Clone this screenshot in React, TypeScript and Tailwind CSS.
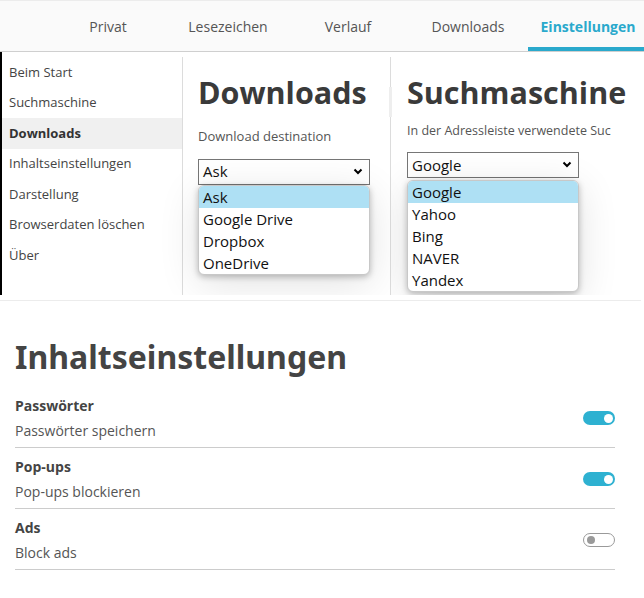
import React from "react";

const tabs = ["Privat", "Lesezeichen", "Verlauf", "Downloads", "Einstellungen"];

const sideItems = [
  "Beim Start",
  "Suchmaschine",
  "Downloads",
  "Inhaltseinstellungen",
  "Darstellung",
  "Browserdaten löschen",
  "Über",
];

const rows = [
  { title: "Passwörter", desc: "Passwörter speichern", on: true },
  { title: "Pop-ups", desc: "Pop-ups blockieren", on: true },
  { title: "Ads", desc: "Block ads", on: false },
];

function Chevron() {
  return (
    <svg width="10" height="7" viewBox="0 0 10 7" className="text-black">
      <path d="M1.5 1.5 L5 5 L8.5 1.5" fill="none" stroke="currentColor" strokeWidth="2" />
    </svg>
  );
}

function FakeSelect({
  value,
  options,
  gap,
}: {
  value: string;
  options: string[];
  gap: string;
}) {
  return (
    <div className="w-[172px] relative">
      <div className="h-[26px] border border-[#767676] bg-white flex items-center justify-between pl-[4px] pr-[6px] text-[15px] text-[#111]">
        <span>{value}</span>
        <Chevron />
      </div>
      <div
        className={`${gap} rounded-[6px] bg-white border border-[#c8c8c8] shadow-[0_2px_6px_rgba(0,0,0,0.25),0_8px_40px_rgba(0,0,0,0.12)] overflow-hidden text-[15px] text-[#111]`}
      >
        {options.map((o, i) => (
          <div
            key={o}
            className={`h-[22px] leading-[22px] px-[4px] ${i === 0 ? "bg-[#aee0f4]" : ""}`}
          >
            {o}
          </div>
        ))}
      </div>
    </div>
  );
}

function Toggle({ on }: { on: boolean }) {
  return on ? (
    <div className="w-[32px] h-[14px] rounded-full bg-[#2eb1d1] flex items-center justify-end pr-[2px]">
      <div className="w-[9px] h-[9px] rounded-full bg-white" />
    </div>
  ) : (
    <div className="w-[32px] h-[14px] rounded-full border border-[#9a9a9a] flex items-center pl-[3px]">
      <div className="w-[8px] h-[8px] rounded-full bg-[#9a9a9a]" />
    </div>
  );
}

export default function App() {
  return (
    <div className="w-[644px] h-[598px] overflow-hidden bg-white font-['Open_Sans',sans-serif] text-[#333]">
      {/* Tab bar */}
      <div className="h-[52px] bg-[#fafafa] border-t border-[#ececec] border-b border-b-[#cfcfcf] flex pl-[48px]">
        {tabs.map((t, i) => (
          <div
            key={t}
            className={`w-[120px] flex-none flex items-center justify-center text-[14px] ${
              i === 4 ? "font-bold text-[#2aa9cc] border-b-[4px] border-[#2aa9cc] pt-[4px]" : "text-[#555]"
            }`}
          >
            {t}
          </div>
        ))}
      </div>

      {/* Settings preview strip */}
      <div className="flex h-[243px] overflow-hidden">
        <div className="w-[183px] flex-none border-l-2 border-black pt-[1px] flex flex-col">
          <div className="flex-1 border-r border-[#dcdcdc] mt-[4px]">
            {sideItems.map((s, i) => (
              <div
                key={s}
                className={`h-[30.5px] flex items-center pl-[7px] text-[13px] ${
                  i === 2 ? "bg-[#f0f0f0] font-bold text-[#333]" : "text-[#444]"
                }`}
              >
                {s}
              </div>
            ))}
          </div>
        </div>

        <div className="w-[208px] flex-none border-r border-[#dcdcdc] mt-[5px] pl-[15px] relative">
          <div className="absolute right-[-2px] top-[30px] w-[3px] h-[30px] bg-[#eeeeee]" />
          <div className="text-[30.5px] font-bold text-[#3a3a3a] leading-[40px] mt-[15px]">Downloads</div>
          <div className="text-[13px] text-[#555] mt-[15px]">Download destination</div>
          <div className="mt-[12px]">
            <FakeSelect value="Ask" options={["Ask", "Google Drive", "Dropbox", "OneDrive"]} gap="mt-0" />
          </div>
        </div>

        <div className="flex-1 min-w-0 pl-[16px] overflow-hidden">
          <div className="text-[30.5px] font-bold text-[#3a3a3a] leading-[40px] mt-[20px] whitespace-nowrap">Suchmaschine</div>
          <div className="text-[12.5px] text-[#555] mt-[10px] whitespace-nowrap">In der Adressleiste verwendete Suc</div>
          <div className="mt-[11px]">
            <FakeSelect
              value="Google"
              options={["Google", "Yahoo", "Bing", "NAVER", "Yandex"]}
              gap="mt-[2px]"
            />
          </div>
        </div>
      </div>

      {/* Content settings */}
      <div className="border-t border-[#ececec] mt-[5px] w-[641px] pl-[15px] pr-[26px]">
        <div className="text-[32px] font-bold text-[#444] leading-[44px] mt-[34px] mb-[8px] font-['Noto_Sans',sans-serif]">
          Inhaltseinstellungen
        </div>
        {rows.map((r) => (
          <div key={r.title} className="flex items-center justify-between border-b border-[#cccccc] pt-[8px] pb-[6px]">
            <div>
              <div className="h-[21px] leading-[21px] text-[14px] font-bold text-[#444]">{r.title}</div>
              <div className="h-[21px] leading-[21px] mt-[4px] text-[14px] text-[#555]">{r.desc}</div>
            </div>
            <Toggle on={r.on} />
          </div>
        ))}
      </div>
    </div>
  );
}
